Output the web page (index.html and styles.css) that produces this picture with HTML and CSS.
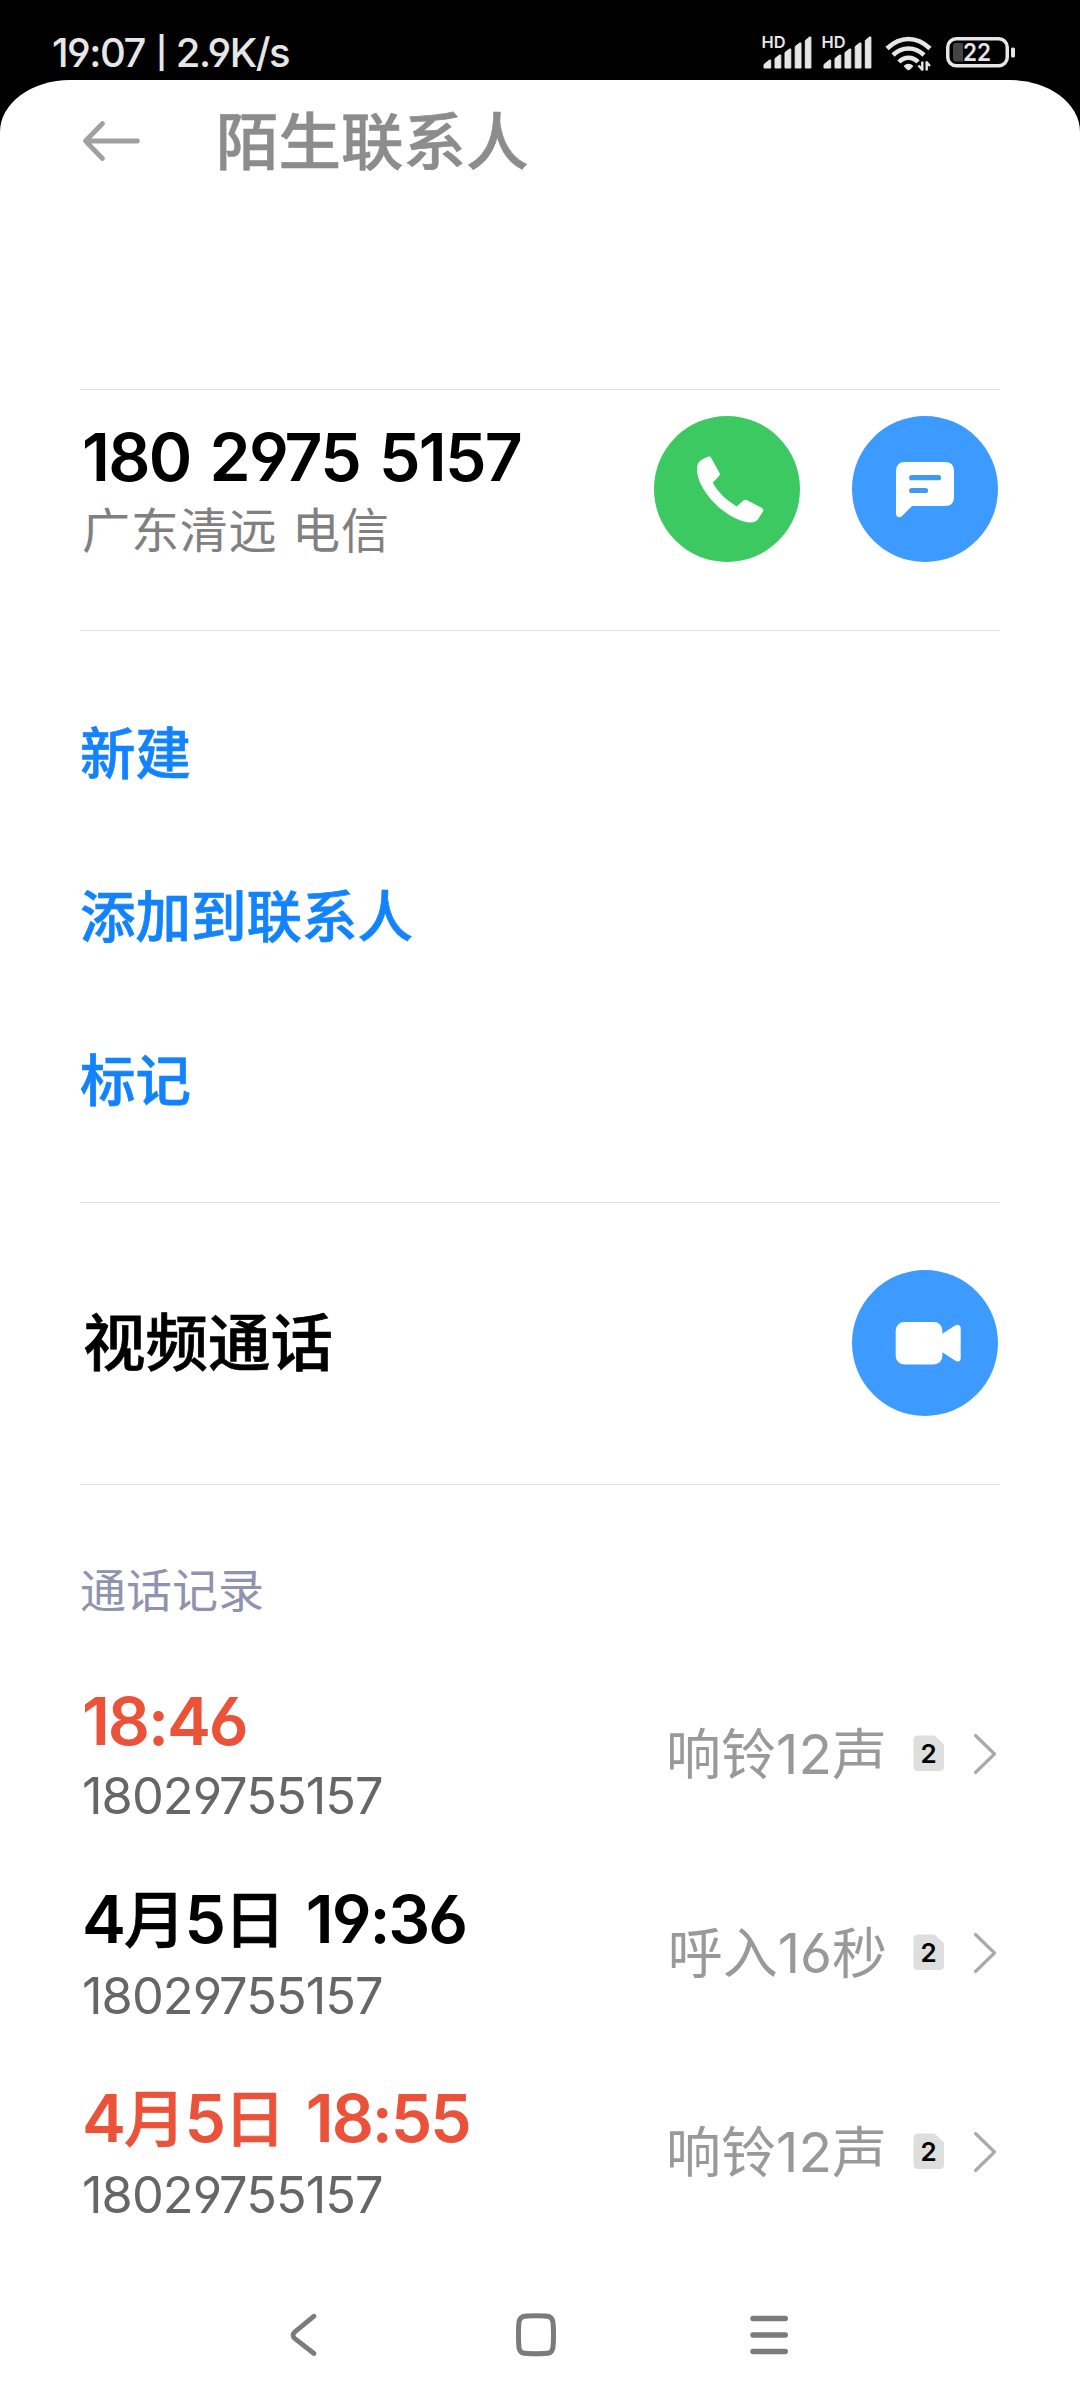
FILE: index.html
```html
<!DOCTYPE html>
<html lang="zh-CN">
<head>
<meta charset="utf-8">
<title>陌生联系人</title>
<link rel="stylesheet" href="styles.css">
</head>
<body>
<div class="phone">
  <header class="status">
    <span class="status-text">19:07 <span class="bar">|</span> 2.9K/s</span>
    <div class="status-icons">
      <svg class="signal" width="50" height="34" viewBox="0 0 50 34"><text x="-0.5" y="13" class="hd" textLength="24" lengthAdjust="spacingAndGlyphs">HD</text><path d="M2 33v-3.500l5.500-4.500h1.200v8zM13 33v-9.500l4.500-3.500h1.300v13zM23 33v-15.500l4.500-3.500h1.300v19zM33.200 33v-21.500l4.500-3.500h1.300v25zM43.300 33v-27.500l4.200-3.500h1.400v31z" fill="#e6e6e6" stroke="#e6e6e6" stroke-linejoin="round"/></svg>
      <svg class="signal" width="50" height="34" viewBox="0 0 50 34"><text x="-0.5" y="13" class="hd" textLength="24" lengthAdjust="spacingAndGlyphs">HD</text><path d="M2 33v-3.500l5.500-4.500h1.200v8zM13 33v-9.500l4.500-3.500h1.300v13zM23 33v-15.500l4.500-3.500h1.300v19zM33.200 33v-21.500l4.500-3.500h1.300v25zM43.300 33v-27.500l4.200-3.500h1.400v31z" fill="#e6e6e6" stroke="#e6e6e6" stroke-linejoin="round"/></svg>
      <svg class="wifi" width="48" height="36" viewBox="0 0 48 36"><g fill="none" stroke="#e6e6e6" stroke-width="4.600"><path d="M2 12.500Q12 3 23.500 3T45 12.500"/><path d="M8 19Q15 12.500 23.500 12.500T39 19"/><path d="M14 26Q18 21.700 23.500 21.700T33 26"/></g><path d="M18.500 30q5-4.500 10 0l-3.300 3.500q-1.700 1.500-3.400 0z" fill="#e6e6e6"/><path d="M37.300 25.500v8.500M38 34.500l-4.500-5M41.700 34.500v-8.500M41 25.500l4 4.500" fill="none" stroke="#e6e6e6" stroke-width="2.400"/></svg>
      <svg class="battery" width="70" height="31" viewBox="0 0 70 31"><rect x="1.750" y="1.750" width="59.500" height="27" rx="8.500" fill="none" stroke="#e6e6e6" stroke-width="3.500"/><path d="M17 6v18.500h-7q-3 0-3-3V9q0-3 3-3z" fill="#444"/><rect x="65" y="10.500" width="4" height="10" rx="1.500" fill="#e6e6e6"/><text x="17" y="24.300" class="level" textLength="28" lengthAdjust="spacingAndGlyphs">22</text></svg>
    </div>
  </header>
  <main class="screen">
    <div class="titlebar">
      <svg class="back" width="60" height="44" viewBox="0 0 60 44"><path d="M5.500 22H57.500M22.500 4.500L5.500 22l17 17.500" fill="none" stroke="#a0a0a0" stroke-width="4.800" stroke-linecap="round" stroke-linejoin="round"/></svg>
      <h1 class="title">陌生联系人</h1>
    </div>
    <section class="contact">
      <div class="contact-text">
        <div class="number">180 2975 5157</div>
        <div class="place">广东清远 电信</div>
      </div>
      <div class="circle green"><svg width="146" height="146" viewBox="0 0 146 146"><path d="M54.500 40.500Q56 40 57 41.500L65.800 57.500Q66 59 65 60L58.700 66.800Q66 80.500 82.700 90.600L90 84Q91 83.500 92.500 84L108 92Q110 93.500 109 95.500L104.500 102.500Q102 106.500 96.500 106.500C75 106 43 76 43 53Q43 47.500 46 45Q49.500 42 54.500 40.500Z" fill="#fff"/></svg></div>
      <div class="circle blue"><svg width="146" height="146" viewBox="0 0 146 146"><path d="M53 46H93Q102 46 102 55V81Q102 90 93 90H60L50 100Q48 102 46 101Q44 100 44 98V55Q44 46 53 46Z" fill="#fff"/><path d="M59.700 61.700H86.500M59.700 74.500H73.500" stroke="#4299ef" stroke-width="5.200" stroke-linecap="round"/></svg></div>
    </section>
    <section class="actions">
      <div class="action">新建</div>
      <div class="action">添加到联系人</div>
      <div class="action">标记</div>
    </section>
    <section class="video">
      <div class="video-label">视频通话</div>
      <div class="circle blue"><svg width="146" height="146" viewBox="0 0 146 146"><rect x="43.700" y="52" width="46.700" height="42.500" rx="8.500" fill="#fff"/><path d="M90 64L103 55.500Q105.500 54 107.500 55.500Q108.700 56.500 108.700 58.500V88Q108.700 90.500 107.200 91.200Q105.500 92 103 90.500L90 82Z" fill="#fff"/></svg></div>
    </section>
    <section class="log">
      <h2 class="log-title">通话记录</h2>
      <div class="row">
        <div class="call"><div class="time missed">18:46</div><div class="from">18029755157</div></div>
        <div class="info">响铃12声</div>
        <svg class="sim" width="32" height="37" viewBox="0 0 32 37"><path d="M5 .5H21.500L31 9.500V31.500Q31 36 26.500 36H5Q.5 36 .5 31.500V5Q.5 .5 5 .5Z" fill="#dedede"/><text x="15.500" y="28" class="sim-no">2</text></svg>
        <svg class="chev" width="24" height="42" viewBox="0 0 24 42"><path d="M2.500 2.500L21.500 21 2.500 39.500" fill="none" stroke="#aaa" stroke-width="3.200" stroke-linecap="round" stroke-linejoin="round"/></svg>
      </div>
      <div class="row">
        <div class="call"><div class="time">4<span class="han">月</span>5<span class="han">日</span> 19:36</div><div class="from">18029755157</div></div>
        <div class="info">呼入16秒</div>
        <svg class="sim" width="32" height="37" viewBox="0 0 32 37"><path d="M5 .5H21.500L31 9.500V31.500Q31 36 26.500 36H5Q.5 36 .5 31.500V5Q.5 .5 5 .5Z" fill="#dedede"/><text x="15.500" y="28" class="sim-no">2</text></svg>
        <svg class="chev" width="24" height="42" viewBox="0 0 24 42"><path d="M2.500 2.500L21.500 21 2.500 39.500" fill="none" stroke="#aaa" stroke-width="3.200" stroke-linecap="round" stroke-linejoin="round"/></svg>
      </div>
      <div class="row">
        <div class="call"><div class="time missed">4<span class="han">月</span>5<span class="han">日</span> 18:55</div><div class="from">18029755157</div></div>
        <div class="info">响铃12声</div>
        <svg class="sim" width="32" height="37" viewBox="0 0 32 37"><path d="M5 .5H21.500L31 9.500V31.500Q31 36 26.500 36H5Q.5 36 .5 31.500V5Q.5 .5 5 .5Z" fill="#dedede"/><text x="15.500" y="28" class="sim-no">2</text></svg>
        <svg class="chev" width="24" height="42" viewBox="0 0 24 42"><path d="M2.500 2.500L21.500 21 2.500 39.500" fill="none" stroke="#aaa" stroke-width="3.200" stroke-linecap="round" stroke-linejoin="round"/></svg>
      </div>
    </section>
    <nav class="nav">
      <svg width="48" height="48" viewBox="0 0 48 48"><path d="M34 5.200L14.600 21.200Q11.500 24.200 14.600 27.300L34 42.500" fill="none" stroke="#7b7b7b" stroke-width="4.800" stroke-linecap="round" stroke-linejoin="round"/></svg>
      <svg width="48" height="48" viewBox="0 0 48 48"><path d="M23 4.700Q33 4.700 36 5.500Q39 7 39.700 10Q40.500 14 40.500 23.800T39.700 37.500Q39 41 36 42Q33 42.700 23 42.700T10 42Q7 41 6.200 37.500Q5.500 34 5.500 23.800T6.200 10Q7 7 10 5.500Q13 4.700 23 4.700Z" fill="none" stroke="#7b7b7b" stroke-width="5"/></svg>
      <svg width="48" height="48" viewBox="0 0 48 48"><path d="M8 7.500H40.300M8 24H40.300M8 40.500H40.300" stroke="#7b7b7b" stroke-width="5.400" stroke-linecap="round"/></svg>
    </nav>
  </main>
</div>
</body>
</html>
```
FILE: styles.css
```css
* { box-sizing: border-box; }

body {
  margin: 0;
  background: #000;
  color: #000;
  font-family: Inter, "Noto Sans CJK SC", sans-serif;
  font-feature-settings: "cv03", "cv04";
}

svg { display: block; flex: none; }

.phone {
  width: 1080px;
  height: 2400px;
  display: flex;
  flex-direction: column;
  overflow: hidden;
}

.status {
  height: 80px;
  flex: none;
  display: flex;
  justify-content: space-between;
  padding: 23px 64px 0 52px;
}

.status-text {
  color: #e6e6e6;
  font-size: 40px;
  font-weight: 500;
  line-height: 60px;
  letter-spacing: -1.500px;
  word-spacing: 0;
  white-space: pre;
}
.bar { font-size: 31px; font-weight: 600; vertical-align: 3px; line-height: 1; padding: 0 1px 0 2px; }

.status-icons { display: flex; align-items: flex-start; padding-top: 12px; }
.signal { margin-right: 10px; overflow: visible; }
.wifi { margin: 1px 13px 0 3px; }
.battery { margin-top: 2px; }
.hd { font-size: 16.500px; font-weight: 600; fill: #e6e6e6; }
.level { font-size: 24.500px; font-weight: 600; fill: #e6e6e6; }

.screen {
  flex: 1;
  display: flex;
  flex-direction: column;
  padding: 0 80px;
  background: #fff;
  border-radius: 70px 70px 0 0 / 52px 52px 0 0;
}

.titlebar {
  height: 310px;
  flex: none;
  display: flex;
  align-items: flex-start;
  gap: 76px;
  padding-top: 26px;
  border-bottom: 1px solid #e0e0e0;
}

.back { margin-top: 13px; }

.title {
  margin: 0;
  color: #8c8c8c;
  font-size: 62.500px;
  font-weight: 500;
  line-height: 72px;
  -webkit-text-stroke: .6px currentColor;
}

.contact {
  height: 241px;
  flex: none;
  display: flex;
  gap: 52px;
  padding: 26px 2px 0 2px;
  border-bottom: 1px solid #e0e0e0;
}

.contact-text { flex: 1; padding-top: 5px; }

.number {
  font-size: 66px;
  font-weight: 600;
  line-height: 72px;
  letter-spacing: -1.700px;
  word-spacing: 4px;
  white-space: nowrap;
}

.place {
  margin-top: 8px;
  color: #808080;
  font-size: 48px;
  line-height: 60px;
  letter-spacing: .9px;
}

.circle { width: 146px; height: 146px; flex: none; border-radius: 50%; }
.green { background: #3dc962; }
.blue { background: #3d9bff; }

.actions {
  height: 572px;
  flex: none;
  padding-top: 41px;
  border-bottom: 1px solid #e0e0e0;
}

.action {
  height: 163.300px;
  color: #1283fd;
  font-size: 55.500px;
  font-weight: 500;
  line-height: 163.300px;
  -webkit-text-stroke: .7px currentColor;
}

.video {
  height: 282px;
  flex: none;
  display: flex;
  align-items: center;
  justify-content: space-between;
  padding: 0 2px 1px 3px;
  border-bottom: 1px solid #e0e0e0;
}

.video-label {
  font-size: 62.500px;
  font-weight: 500;
  line-height: 72px;
  -webkit-text-stroke: .7px currentColor;
}

.log-title {
  height: 169px;
  margin: 0;
  padding-top: 75px;
  color: #8f93ae;
  font-size: 46px;
  font-weight: 400;
  line-height: 60px;
}

.row { height: 199px; display: flex; align-items: center; padding-right: 3px; }
.call { flex: 1; padding: 3px 0 0 2px; }
.time {
  font-size: 66px;
  font-weight: 600;
  line-height: 72px;
  letter-spacing: -2.100px;
  word-spacing: 7px;
  white-space: nowrap;
}
.han { font-size: 62px; font-weight: 500; letter-spacing: -1.500px; -webkit-text-stroke: .6px currentColor; }
.missed { color: #ea533a; }
.from {
  margin-top: 9px;
  color: #666;
  font-size: 50.500px;
  line-height: 60px;
  letter-spacing: -.950px;
}
.info { color: #999; font-size: 55px; line-height: 72px; }
.sim { margin-left: 26px; }
.sim-no { font-size: 26px; font-weight: 600; text-anchor: middle; }
.chev { margin-left: 28px; }

.nav {
  height: 122px;
  margin: auto 0 4px;
  flex: none;
  display: flex;
  justify-content: space-between;
  align-items: center;
  padding: 0 207px 0 200px;
}
```
